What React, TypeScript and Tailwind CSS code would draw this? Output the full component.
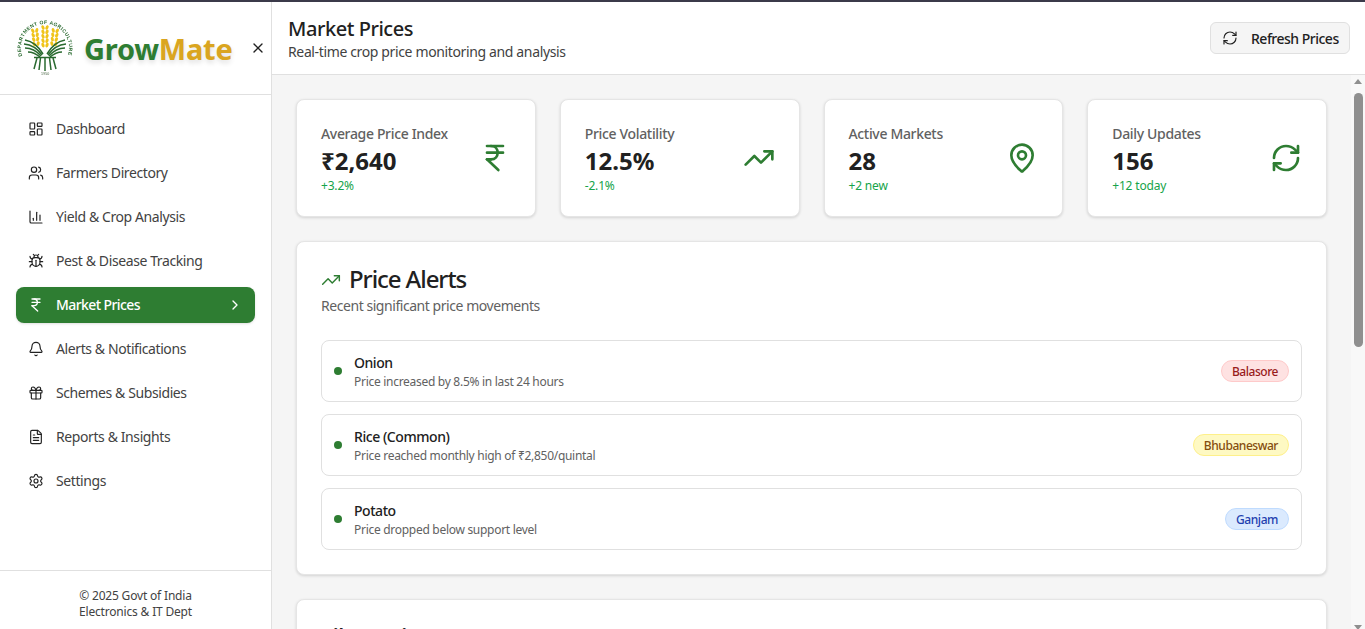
import React from "react";
import {
  LayoutDashboard, Users, BarChart3, Bug, IndianRupee, ChevronRight, Bell, Gift, FileText, Settings,
  X, RefreshCw, TrendingUp, MapPin,
} from "lucide-react";

const nav = [
  { label: "Dashboard", Icon: LayoutDashboard },
  { label: "Farmers Directory", Icon: Users },
  { label: "Yield & Crop Analysis", Icon: BarChart3 },
  { label: "Pest & Disease Tracking", Icon: Bug },
  { label: "Market Prices", Icon: IndianRupee, active: true },
  { label: "Alerts & Notifications", Icon: Bell },
  { label: "Schemes & Subsidies", Icon: Gift },
  { label: "Reports & Insights", Icon: FileText },
  { label: "Settings", Icon: Settings },
];

const stats = [
  { title: "Average Price Index", value: "₹2,640", note: "+3.2%", Icon: IndianRupee },
  { title: "Price Volatility", value: "12.5%", note: "-2.1%", Icon: TrendingUp },
  { title: "Active Markets", value: "28", note: "+2 new", Icon: MapPin },
  { title: "Daily Updates", value: "156", note: "+12 today", Icon: RefreshCw },
];

const alerts = [
  { name: "Onion", text: "Price increased by 8.5% in last 24 hours", tag: "Balasore", cls: "bg-[#fee2e2] border-[#fecaca] text-[#991b1b]" },
  { name: "Rice (Common)", text: "Price reached monthly high of ₹2,850/quintal", tag: "Bhubaneswar", cls: "bg-[#fef9c3] border-[#fef08a] text-[#854d0e]" },
  { name: "Potato", text: "Price dropped below support level", tag: "Ganjam", cls: "bg-[#dbeafe] border-[#bfdbfe] text-[#1e40af]" },
];

const ears = [
  { dx: -8.5, top: 11.5, rows: 4, tilt: -6 },
  { dx: 0, top: 8.5, rows: 5, tilt: 0 },
  { dx: 8.5, top: 11.5, rows: 4, tilt: 6 },
];

function Logo() {
  return (
    <svg width="58" height="58" viewBox="0 0 58 58" className="shrink-0 blur-[0.3px]">
      <defs>
        <path id="seal" d="M6.4 37 A24 24 0 1 1 51.6 37" fill="none" />
      </defs>
      <text fontSize="5" fontWeight="700" fill="#2a6a30" fontFamily="'Liberation Sans', sans-serif">
        <textPath href="#seal" textLength="90">DEPARTMENT OF AGRICULTURE</textPath>
      </text>
      {ears.map((e) => (
        <g key={e.dx} fill="#f0c419" transform={`rotate(${e.tilt} ${29 + e.dx} 28)`}>
          {Array.from({ length: e.rows }).map((_, i) => {
            const cy = e.top + i * 4.4;
            const l = 29 + e.dx - 2;
            const r = 29 + e.dx + 2;
            return (
              <g key={i}>
                <ellipse cx={l} cy={cy} rx="1.5" ry="2.4" transform={`rotate(-22 ${l} ${cy})`} />
                <ellipse cx={r} cy={cy} rx="1.5" ry="2.4" transform={`rotate(22 ${r} ${cy})`} />
              </g>
            );
          })}
        </g>
      ))}
      <g fill="none" stroke="#2a6a30" strokeWidth="1.5">
        <path d="M9 21 Q20 23 27 35" />
        <path d="M8 25 Q19 26 26 36" />
        <path d="M9 29 Q18 29 25 37" />
        <path d="M12 33 Q18 33 24 38" />
        <path d="M49 21 Q38 23 31 35" />
        <path d="M50 25 Q39 26 32 36" />
        <path d="M49 29 Q40 29 33 37" />
        <path d="M46 33 Q40 33 34 38" />
        <path d="M18 38.5 H40" />
        <path d="M21 39 L18 50 M24.500 39 L23 51 M29 39 V52 M33.500 39 L35 51 M37 39 L40 50" />
      </g>
      <text x="29" y="56" textAnchor="middle" fontSize="3.6" fill="#44603f" fontFamily="'Liberation Sans', sans-serif">1 9 5 0</text>
    </svg>
  );
}

function Sidebar() {
  return (
    <aside className="w-[272px] shrink-0 h-full flex flex-col bg-white border-r border-[#e0e0e0]">
      <div className="h-[93px] shrink-0 border-b border-[#e0e0e0] flex items-center pl-[16px] pr-[5px]">
        <Logo />
        <div className="ml-[10px] flex-1 text-[29px] font-bold leading-none tracking-[-0.008em] [text-shadow:0_3px_5px_rgba(0,0,0,0.12)]">
          <span className="text-[#2e7d32]">Grow</span>
          <span className="text-[#daa520]">Mate</span>
        </div>
        <X size={16} strokeWidth={2} className="text-[#212121]" />
      </div>
      <nav className="flex-1 px-4 pt-4 flex flex-col gap-2 tracking-[-0.025em]">
        {nav.map(({ label, Icon, active }) => (
          <div
            key={label}
            className={`h-9 rounded-lg pl-3 pr-3 flex items-center gap-3 text-[14px] ${
              active ? "bg-[#2e7d32] text-white font-medium shadow-sm tracking-[-0.042em]" : "text-[#424242]"
            }`}
          >
            <Icon size={16} strokeWidth={active ? 2 : 1.75} className={active ? "text-white" : "text-[#212121]"} />
            <span className="flex-1 pb-[2px]">{label}</span>
            {active && <ChevronRight size={16} strokeWidth={2} />}
          </div>
        ))}
      </nav>
      <div className="h-[59px] shrink-0 border-t border-[#e0e0e0] pt-[17px] text-center text-[12px] leading-4 text-[#424242] tracking-[-0.015em]">
        <div>© 2025 Govt of India</div>
        <div>Electronics &amp; IT Dept</div>
      </div>
    </aside>
  );
}

function StatCard({ title, value, note, Icon }: (typeof stats)[number]) {
  return (
    <div className="h-[118px] bg-white rounded-lg border border-[#e5e5e5] shadow-[0_1px_3px_rgba(0,0,0,0.14)] pl-6 pr-6 flex items-center justify-between">
      <div className="pt-[2px]">
        <div className="text-[14px] leading-5 font-medium text-[#616161] tracking-[-0.024em]">{title}</div>
        <div className="text-[24px] leading-8 mt-[1px] font-bold text-[#212121] tracking-normal">{value}</div>
        <div className="text-[12px] leading-4 mt-[1px] text-[#16a34a] tracking-[-0.015em]">{note}</div>
      </div>
      <Icon size={32} strokeWidth={2} className="text-[#2e7d32]" />
    </div>
  );
}

function Scrollbar() {
  return (
    <div className="w-[14px] shrink-0 bg-[#f8f8f8] flex flex-col items-center pt-[4px]">
      <div className="w-0 h-0 border-l-[4px] border-r-[4px] border-b-[5px] border-l-transparent border-r-transparent border-b-[#8f8f8f]" />
      <div className="w-[9px] h-[254px] rounded-full bg-[#8f8f8f] mt-[9px]" />
      <div className="flex-1" />
      <div className="w-0 h-0 border-l-[4px] border-r-[4px] border-t-[5px] border-l-transparent border-r-transparent border-t-[#8f8f8f] mb-[-1px]" />
    </div>
  );
}

export default function App() {
  return (
    <div className="h-[629px] w-[1365px] overflow-hidden flex flex-col bg-white font-['Noto_Sans','Open_Sans',sans-serif] tracking-[-0.028em]">
      <div className="h-[2px] shrink-0 bg-[#3b3a4a]" />
      <div className="flex-1 min-h-0 flex">
        <Sidebar />
        <div className="flex-1 min-w-0 flex flex-col">
          <header className="h-[73px] shrink-0 bg-white border-b border-[#e0e0e0] pl-4 pr-[15px] flex items-center justify-between">
            <div>
              <h1 className="text-[20px] leading-7 mt-[1px] mb-[-1px] font-medium text-[#212121]">Market Prices</h1>
              <p className="text-[14px] leading-5 text-[#424242] tracking-[-0.026em]">Real-time crop price monitoring and analysis</p>
            </div>
            <button className="h-8 w-[140px] rounded-md border border-[#e0e0e0] bg-[#f5f5f5] pl-[11px] flex items-center gap-[13px] text-[14px] font-medium text-[#212121] tracking-[-0.036em]">
              <RefreshCw size={16} strokeWidth={1.75} />
              Refresh Prices
            </button>
          </header>
          <div className="flex-1 min-h-0 flex bg-[#f5f5f5]">
            <main className="flex-1 min-w-0 overflow-hidden px-[24px] pt-6 flex flex-col gap-6">
              <div className="grid grid-cols-4 gap-6 shrink-0">
                {stats.map((s) => (
                  <StatCard key={s.title} {...s} />
                ))}
              </div>
              <section className="shrink-0 bg-white rounded-lg border border-[#e5e5e5] shadow-[0_1px_3px_rgba(0,0,0,0.14)] h-[334px] px-6 pt-6">
                <div className="flex items-center gap-2">
                  <TrendingUp size={20} strokeWidth={1.75} className="text-[#2e7d32] -mt-[1px]" />
                  <h2 className="text-[24px] leading-7 -mt-[1px] mb-[1px] font-medium text-[#212121] tracking-[-0.045em]">Price Alerts</h2>
                </div>
                <p className="mt-[2px] text-[14px] leading-5 text-[#616161]">Recent significant price movements</p>
                <div className="mt-[24px] flex flex-col gap-3">
                  {alerts.map((a) => (
                    <div key={a.name} className="h-[62px] rounded-lg border border-[#e0e0e0] pl-3 pr-3 flex items-center">
                      <span className="w-2 h-2 rounded-full bg-[#2e7d32] shrink-0" />
                      <div className="ml-3 flex-1">
                        <div className="text-[14px] leading-5 font-medium text-[#212121]">{a.name}</div>
                        <div className="text-[12px] leading-4 mt-[1px] text-[#616161] tracking-[-0.024em]">{a.text}</div>
                      </div>
                      <span className={`h-[22px] rounded-full border px-[10px] pt-[2px] flex items-center text-[12px] font-medium ${a.cls}`}>{a.tag}</span>
                    </div>
                  ))}
                </div>
              </section>
              <section className="shrink-0 bg-white rounded-lg border border-[#e5e5e5] shadow-[0_1px_3px_rgba(0,0,0,0.14)] h-[300px] px-6 pt-6">
                <h2 className="text-[24px] leading-7 -mt-[1px] font-medium text-[#212121] tracking-[-0.045em]">Filter Prices</h2>
              </section>
            </main>
            <Scrollbar />
          </div>
        </div>
      </div>
    </div>
  );
}
